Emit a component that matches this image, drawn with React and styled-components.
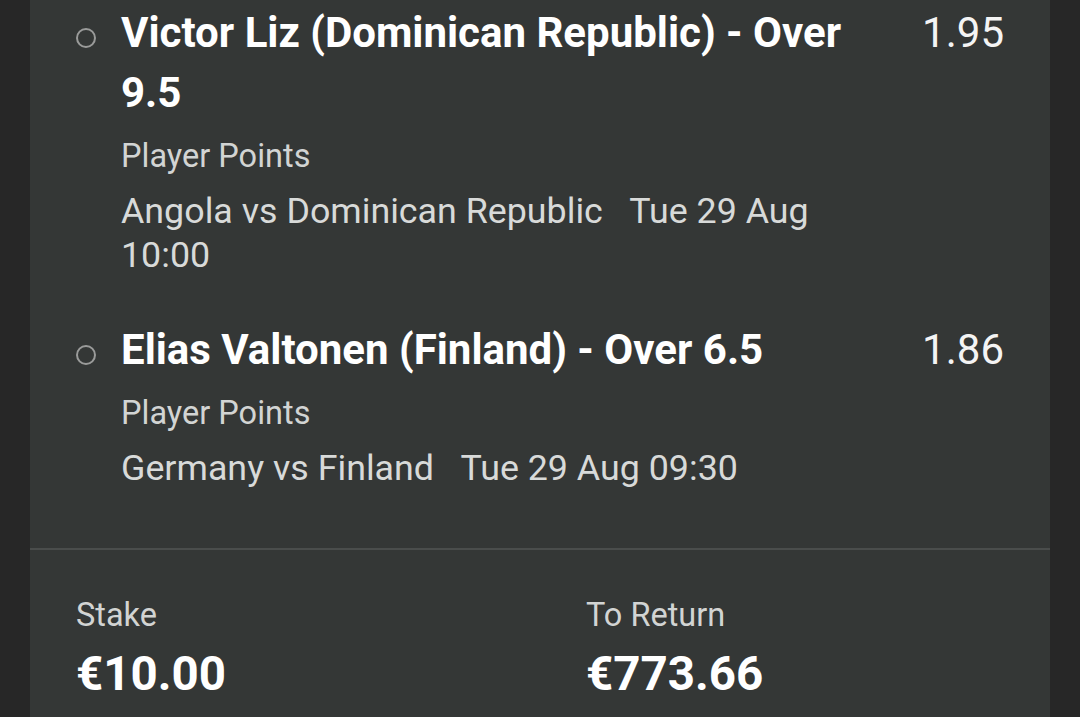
import React from "react";
import styled, { createGlobalStyle } from "styled-components";

const Global = createGlobalStyle`
  html, body { margin: 0; padding: 0; background: #272727; }
  body { font-family: Roboto, "Noto Sans", "Liberation Sans", sans-serif; -webkit-font-smoothing: antialiased; }
  * { box-sizing: border-box; }
`;

const Page = styled.div`
  min-height: 717px;
  padding: 0 30px;
  background: #272727;
`;

const Panel = styled.div`
  width: 1020px;
  min-height: 717px;
  background: #343736;
`;

const List = styled.div`
  padding-bottom: 18px;
  border-bottom: 2px solid #4a4d4c;
`;

const Selection = styled.div`
  display: flex;
  align-items: flex-start;
  padding: 3px 46px 40px 46px;
`;

const RadioCol = styled.div`
  width: 45px;
  flex: 0 0 45px;
  padding-top: 25px;
`;

const Radio = styled.span`
  display: block;
  width: 20px;
  height: 20px;
  border: 2.5px solid #9a9b9a;
  border-radius: 50%;
`;

const Body = styled.div`
  flex: 1;
  min-width: 0;
`;

const Title = styled.div`
  font-size: 42px;
  line-height: 60px;
  font-weight: 700;
  color: #ffffff;
`;

const Market = styled.div`
  margin-top: 11px;
  font-size: 32.5px;
  line-height: 44px;
  color: #d2d4d3;
`;

const Match = styled.div`
  margin-top: 11px;
  font-size: 35.8px;
  line-height: 44px;
  color: #d8dad9;
`;

const Odds = styled.div`
  margin-left: 50px;
  font-size: 42px;
  line-height: 60px;
  font-weight: 400;
  color: #f4f4f4;
`;

const Footer = styled.div`
  display: grid;
  grid-template-columns: 1fr 1fr;
  padding-top: 45px;
`;

const Cell = styled.div`
  padding-left: 46px;
`;

const Label = styled.div`
  font-size: 32.5px;
  line-height: 40px;
  color: #d2d4d3;
`;

const Amount = styled.div`
  margin-top: 11px;
  font-size: 47.5px;
  line-height: 56px;
  font-weight: 700;
  color: #ffffff;
`;

const selections = [
  {
    title: "Victor Liz (Dominican Republic) - Over 9.5",
    market: "Player Points",
    teams: "Angola vs Dominican Republic",
    time: "Tue 29 Aug 10:00",
    odds: "1.95",
  },
  {
    title: "Elias Valtonen (Finland) - Over 6.5",
    market: "Player Points",
    teams: "Germany vs Finland",
    time: "Tue 29 Aug 09:30",
    odds: "1.86",
  },
];

export default function App() {
  return (
    <>
      <Global />
      <Page>
        <Panel>
          <List>
            {selections.map((s) => (
              <Selection key={s.title}>
                <RadioCol>
                  <Radio />
                </RadioCol>
                <Body>
                  <Title>{s.title}</Title>
                  <Market>{s.market}</Market>
                  <Match>{`${s.teams}\u2002 ${s.time}`}</Match>
                </Body>
                <Odds>{s.odds}</Odds>
              </Selection>
            ))}
          </List>
          <Footer>
            <Cell>
              <Label>Stake</Label>
              <Amount>€10.00</Amount>
            </Cell>
            <Cell>
              <Label>To Return</Label>
              <Amount>€773.66</Amount>
            </Cell>
          </Footer>
        </Panel>
      </Page>
    </>
  );
}
